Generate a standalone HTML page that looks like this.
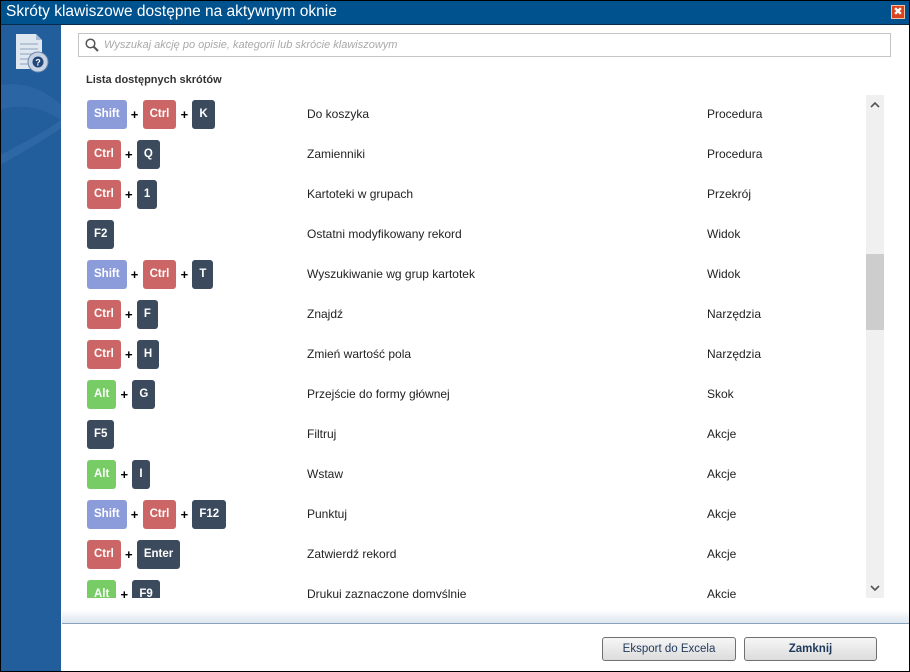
<!DOCTYPE html>
<html><head><meta charset="utf-8"><style>
*{box-sizing:border-box;margin:0;padding:0}
body{width:910px;height:672px;overflow:hidden;background:#fff;font-family:"Liberation Sans","DejaVu Sans",sans-serif;position:relative}
.win{position:absolute;left:0;top:0;width:910px;height:672px;border:1px solid #000;z-index:5;pointer-events:none}
.title{position:absolute;left:0;top:0;width:910px;height:25px;background:#00528f;border-bottom:1px solid #0a2a48;color:#fff;font-size:15.5px;line-height:24px;padding-left:6px}
.close{position:absolute;right:5px;top:5px;width:14px;height:14px;background:#d9441e;border:1px solid #f5c0a8;color:#fff;font-size:11px;line-height:12px;text-align:center;font-weight:bold}
.side{position:absolute;left:0;top:25px;width:61px;height:647px;background:#235e9c;overflow:hidden}
.search{position:absolute;left:78px;top:33px;width:813px;height:24px;border:1px solid #c4c4c4;font-size:11px;font-style:italic;color:#a9a9a9;line-height:22px;padding-left:25px}
.lbl{position:absolute;left:86px;top:74px;font-size:11px;font-weight:bold;color:#333}
.list{position:absolute;left:62px;top:96px;width:802px;height:502px;overflow:hidden}
.row{position:absolute;left:25px;height:29px;width:780px;font-size:12px;color:#222}
.keys{position:absolute;left:0;top:0;display:flex;align-items:center;height:29px}
.k{height:29px;line-height:29px;padding:0 7px;border-radius:3px;color:#fff;font-weight:bold;font-size:11.5px;background:#3b4a5c}
.k.s{background:#8c9bd9}.k.c{background:#cc6666}.k.a{background:#77cc66}
.p{width:16px;text-align:center;font-weight:bold;font-size:13px;color:#000}
.d{position:absolute;left:220px;top:7px}
.cat{position:absolute;left:620px;top:7px}
.sb{position:absolute;left:866px;top:95px;width:18px;height:503px;background:#f0f0f0}
.thumb{position:absolute;left:866px;top:254px;width:18px;height:76px;background:#cdcdcd}
.bot{position:absolute;left:62px;top:610px;width:847px;height:14px;background:linear-gradient(#fff,#dde6ef);border-bottom:1px solid #8aa3bd}
.btn{position:absolute;top:637px;height:24px;border:1px solid #707070;border-radius:3px;background:linear-gradient(#f6f6f6,#dcdcdc);font-size:11.5px;text-align:center;line-height:22px;color:#1e395b}
</style></head><body>
<div class="title">Skróty klawiszowe dostępne na aktywnym oknie<div class="close">✖</div></div>
<div class="side">
<svg width="61" height="647">
<path d="M0 60 Q35 55 61 80 L61 95 Q30 75 0 85Z" fill="#3e78b2" opacity=".3"/>
<path d="M0 130 Q40 110 61 95 L61 103 Q40 118 0 140Z" fill="#4d86bf" opacity=".25"/>
<path d="M16 9 L36 9 L42 15 L42 44 L16 44Z" fill="#dfe7f1"/>
<path d="M36 9 L36 15 L42 15Z" fill="#a9bbd0"/>
<g stroke="#9fb2c8" stroke-width="1.3"><line x1="20" y1="19" x2="38" y2="19"/><line x1="20" y1="24" x2="38" y2="24"/><line x1="20" y1="29" x2="36" y2="29"/><line x1="20" y1="34" x2="32" y2="34"/><line x1="20" y1="39" x2="30" y2="39"/></g>
<circle cx="38" cy="37" r="10" fill="#c8d4e4" stroke="#6d88ab"/><circle cx="38" cy="37" r="5.5" fill="#23477a"/>
<text x="38" y="40.5" font-size="9" fill="#fff" text-anchor="middle" font-weight="bold">?</text>
</svg></div>
<div class="search"><svg style="position:absolute;left:6px;top:4px" width="14" height="14"><circle cx="5.5" cy="5.5" r="4.3" fill="none" stroke="#555" stroke-width="1.5"/><line x1="8.5" y1="8.5" x2="13" y2="13" stroke="#555" stroke-width="2"/></svg>Wyszukaj akcję po opisie, kategorii lub skrócie klawiszowym</div>
<div class="lbl">Lista dostępnych skrótów</div>
<div class="list">
<div class="row" style="top:4px"><div class="keys"><span class="k s">Shift</span><span class="p">+</span><span class="k c">Ctrl</span><span class="p">+</span><span class="k">K</span></div><span class="d">Do koszyka</span><span class="cat">Procedura</span></div>
<div class="row" style="top:44px"><div class="keys"><span class="k c">Ctrl</span><span class="p">+</span><span class="k">Q</span></div><span class="d">Zamienniki</span><span class="cat">Procedura</span></div>
<div class="row" style="top:84px"><div class="keys"><span class="k c">Ctrl</span><span class="p">+</span><span class="k">1</span></div><span class="d">Kartoteki w grupach</span><span class="cat">Przekrój</span></div>
<div class="row" style="top:124px"><div class="keys"><span class="k">F2</span></div><span class="d">Ostatni modyfikowany rekord</span><span class="cat">Widok</span></div>
<div class="row" style="top:164px"><div class="keys"><span class="k s">Shift</span><span class="p">+</span><span class="k c">Ctrl</span><span class="p">+</span><span class="k">T</span></div><span class="d">Wyszukiwanie wg grup kartotek</span><span class="cat">Widok</span></div>
<div class="row" style="top:204px"><div class="keys"><span class="k c">Ctrl</span><span class="p">+</span><span class="k">F</span></div><span class="d">Znajdź</span><span class="cat">Narzędzia</span></div>
<div class="row" style="top:244px"><div class="keys"><span class="k c">Ctrl</span><span class="p">+</span><span class="k">H</span></div><span class="d">Zmień wartość pola</span><span class="cat">Narzędzia</span></div>
<div class="row" style="top:284px"><div class="keys"><span class="k a">Alt</span><span class="p">+</span><span class="k">G</span></div><span class="d">Przejście do formy głównej</span><span class="cat">Skok</span></div>
<div class="row" style="top:324px"><div class="keys"><span class="k">F5</span></div><span class="d">Filtruj</span><span class="cat">Akcje</span></div>
<div class="row" style="top:364px"><div class="keys"><span class="k a">Alt</span><span class="p">+</span><span class="k">I</span></div><span class="d">Wstaw</span><span class="cat">Akcje</span></div>
<div class="row" style="top:404px"><div class="keys"><span class="k s">Shift</span><span class="p">+</span><span class="k c">Ctrl</span><span class="p">+</span><span class="k">F12</span></div><span class="d">Punktuj</span><span class="cat">Akcje</span></div>
<div class="row" style="top:444px"><div class="keys"><span class="k c">Ctrl</span><span class="p">+</span><span class="k">Enter</span></div><span class="d">Zatwierdź rekord</span><span class="cat">Akcje</span></div>
<div class="row" style="top:484px"><div class="keys"><span class="k a">Alt</span><span class="p">+</span><span class="k">F9</span></div><span class="d">Drukuj zaznaczone domyślnie</span><span class="cat">Akcje</span></div>
</div>
<div class="sb"><svg width="18" height="503"><path d="M5 12 L9 8 L13 12" fill="none" stroke="#555" stroke-width="1.6"/><path d="M5 491 L9 495 L13 491" fill="none" stroke="#555" stroke-width="1.6"/></svg></div>
<div class="thumb"></div>
<div class="bot"></div>
<div class="btn" style="left:602px;width:134px">Eksport do Excela</div>
<div class="btn" style="left:744px;width:133px;font-weight:bold">Zamknij</div>
<div class="win"></div>
</body></html>
